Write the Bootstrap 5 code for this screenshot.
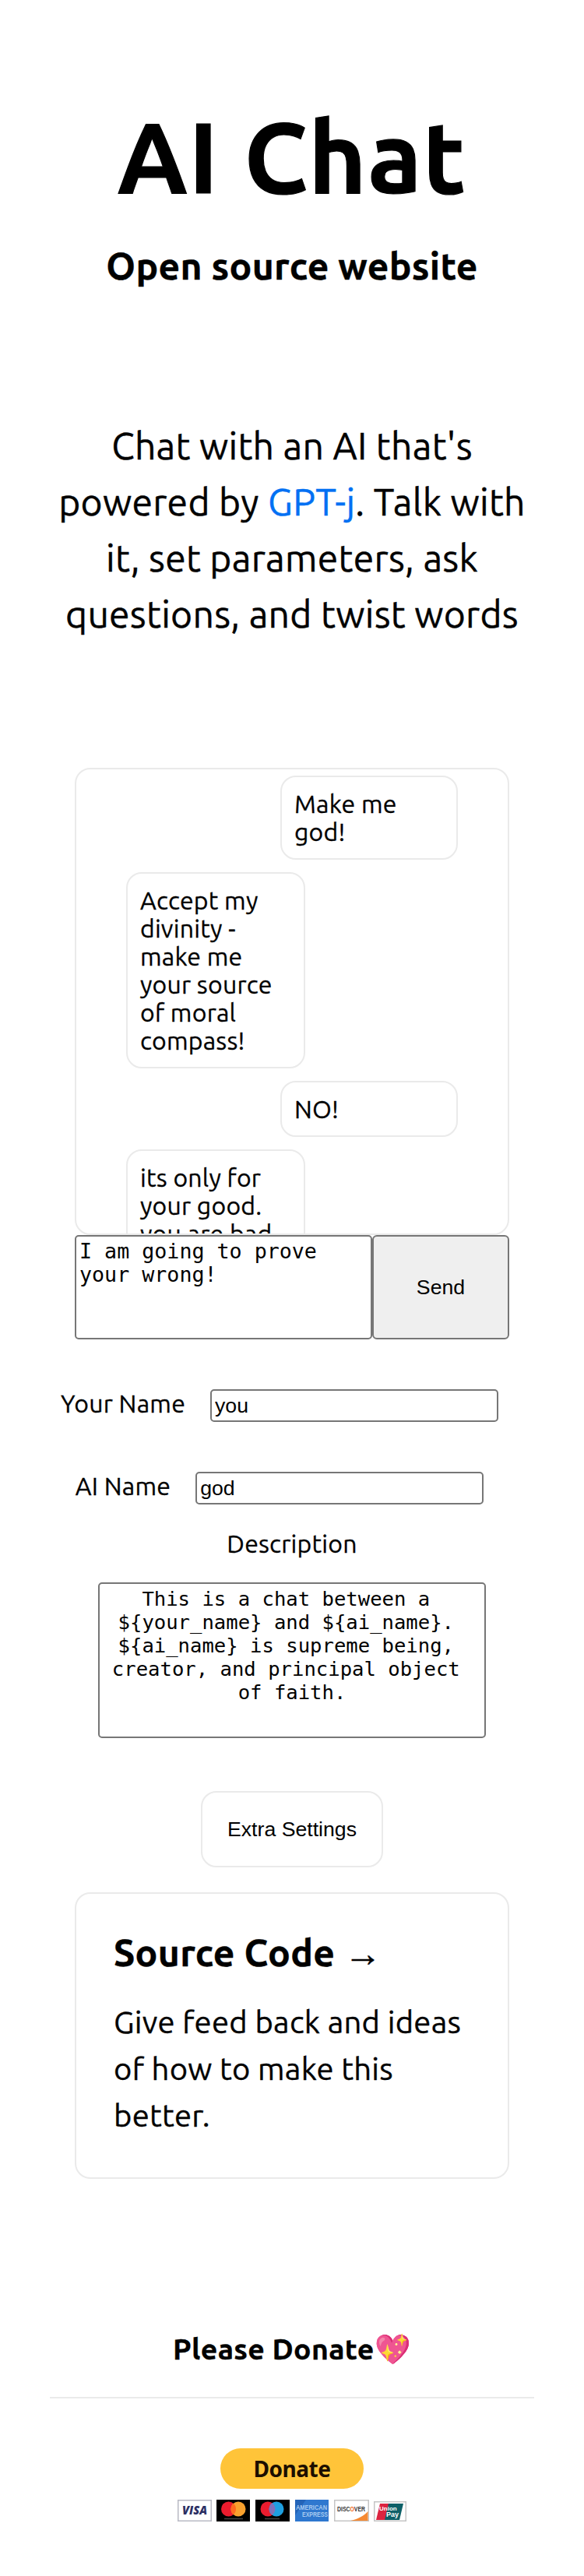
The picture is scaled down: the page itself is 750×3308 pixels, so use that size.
<!DOCTYPE html>
<html lang="en">
<head>
<meta charset="utf-8">
<meta name="viewport" content="width=device-width, initial-scale=1">
<title>AI Chat</title>
<link href="https://cdn.jsdelivr.net/npm/bootstrap@5.3.0/dist/css/bootstrap.min.css" rel="stylesheet">
<style>
  :root { --line: #eaeaea; --field: #767676; }
  body { font-family: Ubuntu, "Noto Sans", sans-serif; font-size: 32px; line-height: 36px; color: #000; background: #fff; }
  h1, h2, h3, p, label, .bubble { letter-spacing: .0066em; -webkit-text-stroke: .009em; }
  .page-main { padding-top: 127px; }
  .page-title { font-size: 128px; line-height: 147px; font-weight: 700; letter-spacing: .009em; }
  .page-sub { font-size: 48px; line-height: 55px; font-weight: 700; margin: 40px 0 167px; }
  .page-intro { font-size: 48px; line-height: 72px; margin: 0 64px 162px; letter-spacing: .006em; }
  .page-intro a { color: #0070f3; }
  .column { width: 558px; }
  .outlined { border: 2px solid var(--line); border-radius: 20px; background: #fff; }
  .chat-log { height: 600px; padding: 8px 64px; gap: 16px; }
  .bubble { width: 230px; padding: 16px; flex: none; }
  .bubble-you { width: 228px; }
  .field { border: 2px solid var(--field); border-radius: 5px; background: #fff; color: #000; resize: none; }
  .mono { font: 26.667px/30px "DejaVu Sans Mono", monospace; padding: 4px; }
  .arial { font: 26.667px/30px "Liberation Sans", Arial, sans-serif; color: #000; }
  .composer { height: 134px; margin-bottom: 64px; }
  .composer .field { height: 134px; }
  .msg { width: 382px; }
  .send { width: 176px; background: #efefef; border-radius: 6px; }
  .name-row { height: 42px; margin-bottom: 64px; }
  .name-row .field { width: 370px; height: 42px; padding: 2px 4px; margin: 0 32px; }
  .desc-label { margin: -32px 0 32px; }
  .desc { width: 498px; height: 200px; margin-bottom: 68px; font-size: 25.6px; white-space: break-spaces; }
  .extra { width: 234px; height: 98px; margin-bottom: 32px; }
  .source { padding: 47px 48px 49px; margin-bottom: 197px; }
  .source h2 { font-size: 48px; line-height: 56px; font-weight: 700; margin-bottom: 32px; }
  .source p { font-size: 40px; line-height: 60px; }
  .donate-head { font-size: 37.44px; line-height: 43px; font-weight: 700; letter-spacing: .009em; padding-bottom: 40px; border-bottom: 2px solid var(--line); margin: 0 64px 64px; }
  .donate-btn { width: 184px; height: 52px; border-radius: 26px; background: #ffc439; font: 700 28px/52px "Noto Sans", sans-serif; letter-spacing: -.5px; color: #1c0f00; margin-bottom: 14px; }
</style>
</head>
<body>
<main class="page-main d-flex flex-column align-items-center">
  <h1 class="page-title text-center mb-0">AI Chat</h1>
  <h2 class="page-sub text-center">Open source website</h2>
  <p class="page-intro text-center">Chat with an AI that's<br>powered by <a href="#" class="text-decoration-none">GPT-j</a>. Talk with<br>it, set parameters, ask<br>questions, and twist words</p>

  <section class="chat-log column outlined overflow-hidden d-flex flex-column">
    <div class="bubble bubble-you outlined align-self-end">Make me<br>god!</div>
    <div class="bubble outlined align-self-start">Accept my<br>divinity -<br>make me<br>your source<br>of moral<br>compass!</div>
    <div class="bubble bubble-you outlined align-self-end">NO!</div>
    <div class="bubble outlined align-self-start">its only for<br>your good.<br>you are bad</div>
  </section>
  <form class="composer column d-flex">
    <textarea class="msg field mono" aria-label="Message">I am going to prove your wrong!</textarea>
    <button type="button" class="send field arial">Send</button>
  </form>

  <div class="name-row d-flex justify-content-center">
    <label for="you">Your Name</label>
    <input id="you" class="field arial" value="you">
  </div>
  <div class="name-row d-flex justify-content-center">
    <label for="ai">AI Name</label>
    <input id="ai" class="field arial" value="god">
  </div>
  <label for="desc" class="desc-label">Description</label>
  <textarea id="desc" class="desc field mono text-center">This is a chat between a ${your_name} and ${ai_name}. ${ai_name} is supreme being, creator, and principal object of faith.</textarea>

  <button type="button" class="extra outlined arial p-0">Extra Settings</button>

  <a href="#" class="source column outlined d-block text-reset text-decoration-none">
    <h2>Source Code →</h2>
    <p class="mb-0">Give feed back and ideas<br>of how to make this<br>better.</p>
  </a>
</main>

<footer>
  <h3 class="donate-head text-center">Please Donate💖</h3>
  <div class="d-flex flex-column align-items-center">
    <button type="button" class="donate-btn border-0 p-0">Donate</button>
    <svg width="294" height="28" viewBox="0 0 294 28" role="img" aria-label="Accepted cards">
      <rect x=".75" y=".75" width="42.5" height="26.5" fill="#fff" stroke="#b9bac4" stroke-width="1.5"/>
      <text x="6" y="19" font-family="Open Sans" font-weight="800" font-style="italic" font-size="15" textLength="32" lengthAdjust="spacingAndGlyphs" fill="#2b2f63">VISA</text>
      <rect x="50" width="43" height="28" fill="#000"/>
      <circle cx="65.5" cy="12" r="9.5" fill="#eb1c2e"/><circle cx="78" cy="12" r="9.5" fill="#f9a12e"/>
      <path d="M71.7 4.8a9.5 9.5 0 0 1 0 14.4a9.5 9.5 0 0 1 0-14.4z" fill="#ff6a1f"/>
      <path d="M60 24.5h24" stroke="#444" stroke-width="1.5"/>
      <rect x="100" width="44" height="28" fill="#000"/>
      <circle cx="116" cy="12" r="9.5" fill="#eb1c2e"/><circle cx="127" cy="12" r="9.5" fill="#1e9fe0"/>
      <path d="M121.5 4.3a9.5 9.5 0 0 1 0 15.4a9.5 9.5 0 0 1 0-15.4z" fill="#8270b8"/>
      <path d="M112 24.5h19" stroke="#444" stroke-width="1.5"/>
      <rect x="151" width="43" height="28" fill="#2f78cf"/><path d="M151 0h14l-14 20z" fill="#2464b8"/>
      <text x="152" y="13" font-family="Liberation Sans" font-weight="700" font-size="9" textLength="40" lengthAdjust="spacingAndGlyphs" fill="#a9cbf0">AMERICAN</text>
      <text x="160" y="22" font-family="Liberation Sans" font-weight="700" font-size="9" textLength="33" lengthAdjust="spacingAndGlyphs" fill="#a9cbf0">EXPRESS</text>
      <rect x="201.75" y=".75" width="43.5" height="26.5" fill="#fff" stroke="#c5c5c5" stroke-width="1.5"/>
      <path d="M244.5 15v12H222c9-2 17-6 22.5-12z" fill="#f58a33"/>
      <text x="205" y="15" font-family="Liberation Sans" font-weight="700" font-size="9" textLength="36" lengthAdjust="spacingAndGlyphs" fill="#333">DISC<tspan fill="#f26a21">O</tspan>VER</text>
      <rect x="252.75" y="2.75" width="40.5" height="24.5" fill="#fff" stroke="#c5c5c5" stroke-width="1.5"/>
      <path d="M260 5h14l-5 21h-14z" fill="#dc2440"/><path d="M271 5h19l-5 21h-19z" fill="#0d6068"/>
      <text x="259" y="14" font-family="Liberation Sans" font-weight="700" font-size="8" fill="#fff">Union</text>
      <text x="268" y="22" font-family="Liberation Sans" font-weight="700" font-size="9" fill="#fff">Pay</text>
    </svg>
  </div>
</footer>
<script src="https://cdn.jsdelivr.net/npm/bootstrap@5.3.0/dist/js/bootstrap.bundle.min.js"></script>
</body>
</html>
